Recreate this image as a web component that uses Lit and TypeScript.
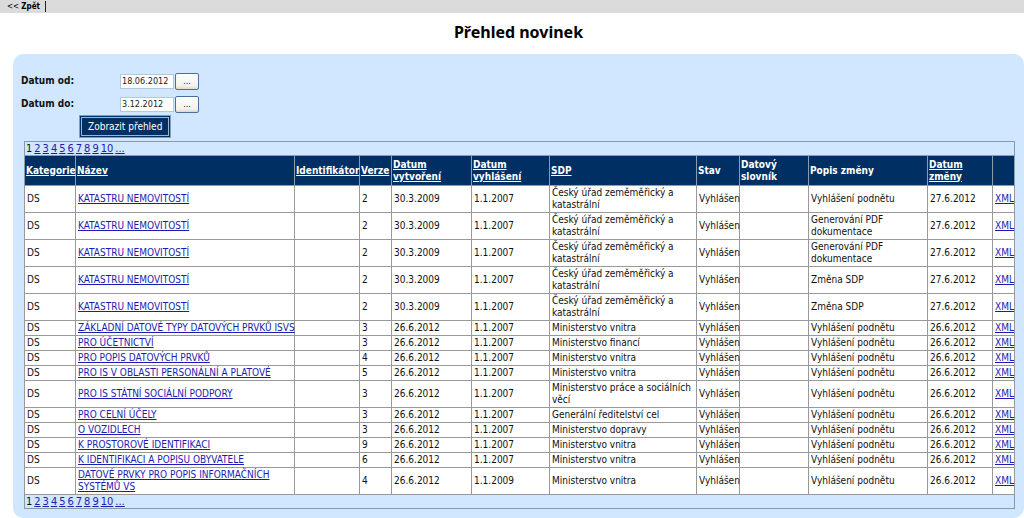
import { LitElement, html, css } from "lit";
import { customElement, property } from "lit/decorators.js";

interface NewsRow {
  name: string;
  version: string;
  created: string;
  published: string;
  sdp: string;
  change: string;
  changed: string;
}

const row = (
  name: string,
  version: string,
  created: string,
  published: string,
  sdp: string,
  change: string,
  changed: string
): NewsRow => ({ name, version, created, published, sdp, change, changed });

// Names up to this length stay on one line; longer ones wrap.
const ONE_LINE_NAME = 42;

const CUZK = "Český úřad zeměměřický a katastrální";
const cadastre = (change: string) =>
  row("KATASTRU NEMOVITOSTÍ", "2", "30.3.2009", "1.1.2007", CUZK, change, "27.6.2012");
const announced = (name: string, version: string, sdp = "Ministerstvo vnitra", published = "1.1.2007") =>
  row(name, version, "26.6.2012", published, sdp, "Vyhlášení podnětu", "26.6.2012");

const ROWS: NewsRow[] = [
  cadastre("Vyhlášení podnětu"),
  cadastre("Generování PDF dokumentace"),
  cadastre("Generování PDF dokumentace"),
  cadastre("Změna SDP"),
  cadastre("Změna SDP"),
  announced("ZÁKLADNÍ DATOVÉ TYPY DATOVÝCH PRVKŮ ISVS", "3"),
  announced("PRO ÚČETNICTVÍ", "3", "Ministerstvo financí"),
  announced("PRO POPIS DATOVÝCH PRVKŮ", "4"),
  announced("PRO IS V OBLASTI PERSONÁLNÍ A PLATOVÉ", "5"),
  announced("PRO IS STÁTNÍ SOCIÁLNÍ PODPORY", "3", "Ministerstvo práce a sociálních věcí"),
  announced("PRO CELNÍ ÚČELY", "3", "Generální ředitelství cel"),
  announced("O VOZIDLECH", "3", "Ministerstvo dopravy"),
  announced("K PROSTOROVÉ IDENTIFIKACI", "9"),
  announced("K IDENTIFIKACI A POPISU OBYVATELE", "6"),
  announced("DATOVÉ PRVKY PRO POPIS INFORMAČNÍCH SYSTÉMŮ VS", "4", "Ministerstvo vnitra", "1.1.2009"),
];

const COLUMNS = [
  { label: "Kategorie", sortable: true, cls: "c-category" },
  { label: "Název", sortable: true, cls: "c-name" },
  { label: "Identifikátor", sortable: true, cls: "c-id" },
  { label: "Verze", sortable: true, cls: "c-version" },
  { label: "Datum vytvoření", sortable: true, cls: "c-created" },
  { label: "Datum vyhlášení", sortable: true, cls: "c-published" },
  { label: "SDP", sortable: true, cls: "c-sdp" },
  { label: "Stav", sortable: false, cls: "c-state" },
  { label: "Datový slovník", sortable: false, cls: "c-dict" },
  { label: "Popis změny", sortable: false, cls: "c-change" },
  { label: "Datum změny", sortable: true, cls: "c-changed" },
  { label: "", sortable: false, cls: "c-xml" },
];

@customElement("date-field")
class DateField extends LitElement {
  @property() label = "";
  @property() value = "";

  static styles = css`
    :host {
      display: flex;
      align-items: center;
      height: 22px;
    }
    .label {
      width: 99px;
      font-weight: bold;
      font-size: 10px;
    }
    .box {
      box-sizing: border-box;
      width: 54px;
      height: 15px;
      margin: 0 1px 0 0;
      padding: 0 1px;
      border: 1px solid #b4c7dc;
      background: #fff;
      color: #222;
      font: 9px "DejaVu Sans Condensed", "DejaVu Sans", sans-serif;
    }
    .pick {
      box-sizing: border-box;
      width: 24px;
      height: 17px;
      padding: 0;
      border: 1px solid #4b6f9b;
      border-radius: 2px;
      background: linear-gradient(#fff, #f2f1ea 80%, #dcd8cc);
      color: #222;
      font: 9px/12px "DejaVu Sans Condensed", "DejaVu Sans", sans-serif;
    }
  `;

  render() {
    return html`
      <label class="label" for="date">${this.label}</label>
      <input class="box" id="date" type="text" .value=${this.value} />
      <button class="pick" type="button" aria-label="Vybrat datum">...</button>
    `;
  }
}

@customElement("app-root")
class AppRoot extends LitElement {
  static styles = css`
    :host {
      display: block;
      background: #fff;
      color: #111;
      font: 10px/12px "DejaVu Sans Condensed", "DejaVu Sans", sans-serif;
    }
    a {
      color: #1c1cb0;
      text-decoration: underline;
    }
    .topbar {
      display: flex;
      align-items: center;
      height: 13px;
      padding-left: 7px;
      background: #dbdbdb;
      font-size: 8px;
      line-height: 11px;
    }
    .back {
      padding-right: 5px;
      border-right: 1px solid #222;
      color: #000;
      text-decoration: none;
    }
    .title {
      margin: 0;
      padding: 8px 0 11px 13px;
      color: #000;
      font: bold 16px/22px "Noto Sans", sans-serif;
      text-align: center;
    }
    .panel {
      margin-left: 13px;
      padding: 16px 9px 9px 11px;
      border-radius: 10px;
      background: #d1e7ff;
    }
    .filters {
      display: flex;
      flex-direction: column;
      gap: 1px;
      margin-left: -3px;
      padding-bottom: 4px;
    }
    .submit {
      align-self: flex-start;
      height: 21px;
      margin-left: 59px;
      padding: 0 7px;
      border: 1px solid #003063;
      outline: 1px solid #7f9db9;
      box-shadow: inset 0 0 0 1px #9db4cc;
      background: #003063;
      color: #fff;
      font: 10px/12px "DejaVu Sans Condensed", "DejaVu Sans", sans-serif;
    }
    .grid {
      width: 100%;
      border-collapse: collapse;
      table-layout: fixed;
      border: 1px solid #8899aa;
    }
    .c-category { width: 51px; }
    .c-name { width: 219px; }
    .c-id { width: 65px; }
    .c-version { width: 32px; }
    .c-created { width: 80px; }
    .c-published { width: 78px; }
    .c-sdp { width: 147px; }
    .c-state { width: 43px; }
    .c-dict { width: 69px; }
    .c-change { width: 119px; }
    .c-changed { width: 65px; }
    .c-xml { width: 22px; }
    .head {
      height: 29px;
      padding: 0 1px;
      border: 1px solid #8d9cab;
      background: #003063;
      color: #fff;
      text-align: left;
    }
    .sort {
      color: #fff;
    }
    .cell {
      padding: 1px 0 1px 2px;
      border: 1px solid #999;
      background: #fff;
    }
    .one-line {
      white-space: nowrap;
    }
    .pager {
      padding: 0 1px;
      font-size: 11px;
      line-height: 13px;
    }
    .pages {
      display: flex;
      gap: 2px;
    }
  `;

  private pager() {
    const pages = ["2", "3", "4", "5", "6", "7", "8", "9", "10", "..."];
    return html`
      <tr>
        <td class="pager" colspan="12">
          <div class="pages"><span>1</span>${pages.map((p) => html`<a href="#">${p}</a>`)}</div>
        </td>
      </tr>
    `;
  }

  render() {
    return html`
      <nav class="topbar"><a class="back" href="#">&lt;&lt; <b>Zpět</b></a></nav>
      <h1 class="title">Přehled novinek</h1>
      <main class="panel">
        <form class="filters">
          <date-field label="Datum od:" value="18.06.2012"></date-field>
          <date-field label="Datum do:" value="3.12.2012"></date-field>
          <button class="submit" type="button">Zobrazit přehled</button>
        </form>
        <table class="grid">
          <colgroup>
            ${COLUMNS.map((c) => html`<col class=${c.cls} />`)}
          </colgroup>
          <thead>
            ${this.pager()}
            <tr>
              ${COLUMNS.map(
                (c) => html`<th class="head" scope="col">
                  ${c.sortable ? html`<a class="sort" href="#">${c.label}</a>` : c.label}
                </th>`
              )}
            </tr>
          </thead>
          <tbody>
            ${ROWS.map(
              (r) => html`<tr>
                <td class="cell">DS</td>
                <td class=${r.name.length <= ONE_LINE_NAME ? "cell one-line" : "cell"}>
                  <a href="#">${r.name}</a>
                </td>
                <td class="cell"></td>
                <td class="cell">${r.version}</td>
                <td class="cell">${r.created}</td>
                <td class="cell">${r.published}</td>
                <td class="cell">${r.sdp}</td>
                <td class="cell">Vyhlášen</td>
                <td class="cell"></td>
                <td class="cell">${r.change}</td>
                <td class="cell">${r.changed}</td>
                <td class="cell"><a href="#">XML</a></td>
              </tr>`
            )}
          </tbody>
          <tfoot>
            ${this.pager()}
          </tfoot>
        </table>
      </main>
    `;
  }
}
